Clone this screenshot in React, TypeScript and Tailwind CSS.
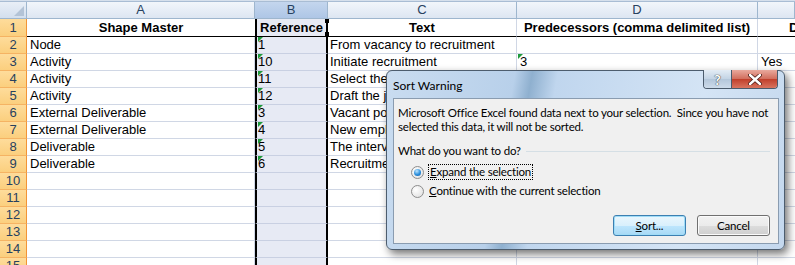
import React from 'react'

const COLS = [
  { key: 'A', w: 'w-[228px]' },
  { key: 'B', w: 'w-[73px]' },
  { key: 'C', w: 'w-[189px]' },
  { key: 'D', w: 'w-[241px]' },
  { key: 'E', w: 'w-[37px]' },
]

const DATA: string[][] = [
  ['Node', '1', 'From vacancy to recruitment', '', ''],
  ['Activity', '10', 'Initiate recruitment', '3', 'Yes'],
  ['Activity', '11', 'Select the candidate', '', ''],
  ['Activity', '12', 'Draft the job profile', '', ''],
  ['External Deliverable', '3', 'Vacant position', '', ''],
  ['External Deliverable', '4', 'New employee', '', ''],
  ['Deliverable', '5', 'The interview report', '', ''],
  ['Deliverable', '6', 'Recruitment plan', '', ''],
]

const Flag = () => (
  <span className="absolute left-[1px] top-0 w-0 h-0 border-t-[5px] border-t-[#1f9a3c] border-r-[5px] border-r-transparent" />
)

const RowHead = ({ n, h }: { n: number; h: string }) => (
  <div
    className={`${h} w-[27px] shrink-0 flex items-center justify-center bg-[linear-gradient(#fedc9b,#fbcf7e)] border-r border-r-[#f29436] border-b border-b-[#f5b363] text-[13px] text-[#27415f]`}
  >
    {n}
  </div>
)

const ColHeader = () => (
  <div className="flex h-[17px]">
    <div className="w-[27px] shrink-0 relative bg-[linear-gradient(#e9eff7,#d3dfee)] border-r border-b border-[#9eb6ce]">
      <span className="absolute right-[2px] bottom-[2px] w-0 h-0 border-b-[10px] border-b-[#b3c3d6] border-l-[10px] border-l-transparent" />
    </div>
    {COLS.map((c) => (
      <div
        key={c.key}
        className={`${c.w} shrink-0 flex items-center justify-center border-r border-b border-[#9eb6ce] text-[13px] text-[#27415f] ${
          c.key === 'B'
            ? 'bg-[linear-gradient(#c4d6ee,#aec6e6)]'
            : 'bg-[linear-gradient(#f2f6fb,#dde6f2)]'
        }`}
      >
        {c.key === 'E' ? '' : c.key}
      </div>
    ))}
  </div>
)

const TitleRow = () => (
  <div className="flex h-[18px]">
    <RowHead n={1} h="h-[18px]" />
    <div className="w-[228px] shrink-0 flex items-center justify-center font-bold border-b border-b-black">Shape Master</div>
    <div className="w-[73px] shrink-0 relative flex items-center justify-center font-bold bg-[#e7eaf4] border-x-2 border-x-black border-b border-b-black">
      Reference
      <span className="absolute -right-[3px] top-0 w-[4px] h-[4px] bg-black" />
      <span className="absolute -right-[3px] bottom-[0px] w-[4px] h-[4px] bg-black" />
    </div>
    <div className="w-[189px] shrink-0 flex items-center justify-center font-bold border-r border-r-[#d0d7e5] border-b border-b-black">Text</div>
    <div className="w-[241px] shrink-0 flex items-center justify-center font-bold border-r border-r-[#d0d7e5] border-b border-b-black">
      Predecessors (comma delimited list)
    </div>
    <div className="w-[37px] shrink-0 flex items-center font-bold border-b border-b-black pl-[31px] whitespace-nowrap overflow-hidden">
      Deliverable
    </div>
  </div>
)

const DataRow = ({ n, cells }: { n: number; cells: string[] }) => (
  <div className="flex h-[17px]">
    <RowHead n={n} h="h-[17px]" />
    <div className="w-[228px] shrink-0 flex items-center pl-[3px] border-r border-b border-[#d0d7e5] whitespace-nowrap overflow-hidden">
      {cells[0]}
    </div>
    <div className="w-[73px] shrink-0 relative flex items-center pl-[1px] bg-[#e7eaf4] border-x-2 border-x-black border-b border-b-[#c9d0e2]">
      {cells[1] && <Flag />}
      {cells[1]}
    </div>
    <div className="w-[189px] shrink-0 flex items-center pl-[2px] border-r border-b border-[#d0d7e5] whitespace-nowrap overflow-hidden">
      {cells[2]}
    </div>
    <div className="w-[241px] shrink-0 relative flex items-center pl-[3px] border-r border-b border-[#d0d7e5]">
      {cells[3] && <Flag />}
      {cells[3]}
    </div>
    <div className="w-[37px] shrink-0 flex items-center pl-[3px] border-b border-[#d0d7e5]">{cells[4]}</div>
  </div>
)

const Radio = ({ on }: { on?: boolean }) => (
  <span className="w-[13px] h-[13px] rounded-full border border-[#8d8d8d] bg-[radial-gradient(circle_at_35%_35%,#ffffff,#dcdcdc)] flex items-center justify-center shrink-0">
    {on && (
      <span className="w-[7px] h-[7px] rounded-full bg-[radial-gradient(circle_at_40%_30%,#bfe6ff,#2b8fdc_55%,#0e5aa8)]" />
    )}
  </span>
)

const Dialog = () => (
  <div className="absolute left-[386px] top-[70px] w-[399px] h-[180px] rounded-[6px] border border-[#4d5d6e] shadow-[3px_4px_8px_rgba(0,0,0,0.55)] bg-[linear-gradient(100deg,#c9dcf0_0%,#b8d0ea_30%,#8fb0cf_34%,#c0d6ee_40%,#d4e4f5_75%,#c4d8ee_100%)] font-['Lato',sans-serif] text-[12px] text-black">
    <div className="flex h-[27px]">
      <div className="pl-[6px] pt-[6px] flex-1">Sort Warning</div>
      <div className="flex h-[19px] -mt-[1px] mr-[6px] rounded-b-[4px] border border-t-0 border-[#4b5b6c] overflow-hidden">
        <div className="w-[28px] flex items-center justify-center border-r border-[#4b5b6c] bg-[linear-gradient(#e3ecf5,#c2d3e4_50%,#b3c6da_51%,#cddbea)] text-[14px] font-bold text-white [text-shadow:0_0_1px_#333,0_0_1px_#333]">
          ?
        </div>
        <div className="w-[45px] flex items-center justify-center bg-[linear-gradient(#e9a99d,#d26f5e_48%,#c1402c_52%,#d9745f)]">
          <svg width="14" height="11" viewBox="0 0 14 11">
            <path d="M2 1 L12 10 M12 1 L2 10" stroke="#4a1a14" strokeWidth="4" strokeLinecap="round" />
            <path d="M2 1 L12 10 M12 1 L2 10" stroke="#ffffff" strokeWidth="2.4" strokeLinecap="round" />
          </svg>
        </div>
      </div>
    </div>
    <div className="ml-[6px] mr-[5px] h-[146px] border border-[#8a9cb0] bg-[#f0f0f0] pl-[4px] pr-[3px] pt-[7px] flex flex-col text-[11.5px] tracking-[-0.2px]">
      <div className="leading-[14px] whitespace-nowrap">
        Microsoft Office Excel found data next to your selection.&nbsp; Since you have not
        <br />
        selected this data, it will not be sorted.
      </div>
      <div className="flex items-center gap-[5px] mt-[10px] mr-[5px] leading-[14px]">
        <span>What do you want to do?</span>
        <span className="flex-1 h-px bg-[#d5dfe5]" />
      </div>
      <div className="flex items-center gap-[4px] ml-[13px] mt-[6px] h-[16px]">
        <Radio on />
        <span className="border border-dotted border-black px-[1px] leading-[14px]">
          <u>E</u>xpand the selection
        </span>
      </div>
      <div className="flex items-center gap-[5px] ml-[13px] mt-[3px] h-[16px]">
        <Radio />
        <span className="leading-[14px]">
          <u>C</u>ontinue with the current selection
        </span>
      </div>
      <div className="flex justify-end gap-[11px] mt-[16px] mr-[5px]">
        <button className="w-[73px] h-[21px] rounded-[3px] border border-[#3c7fb1] bg-[linear-gradient(#eaf6fd,#d9f0fc_50%,#bee6fd_51%,#a7d9f5)] shadow-[inset_0_0_0_1px_#9fdcf7]">
          <u>S</u>ort...
        </button>
        <button className="w-[73px] h-[21px] rounded-[3px] border border-[#707070] bg-[linear-gradient(#f2f2f2,#ebebeb_50%,#dddddd_51%,#cfcfcf)] shadow-[inset_0_0_0_1px_#fbfbfb]">
          Cancel
        </button>
      </div>
    </div>
  </div>
)

export default function App() {
  return (
    <div className="relative w-[795px] h-[265px] overflow-hidden bg-white font-['Liberation_Sans',Arial,sans-serif] text-[13px] text-black">
      <div className="h-[2px] bg-[#d6e0ec] border-b border-[#a9bdd4]" />
      <ColHeader />
      <TitleRow />
      {DATA.map((cells, i) => (
        <DataRow key={i} n={i + 2} cells={cells} />
      ))}
      {[10, 11, 12, 13, 14, 15].map((n) => (
        <DataRow key={n} n={n} cells={['', '', '', '', '']} />
      ))}
      <Dialog />
    </div>
  )
}
